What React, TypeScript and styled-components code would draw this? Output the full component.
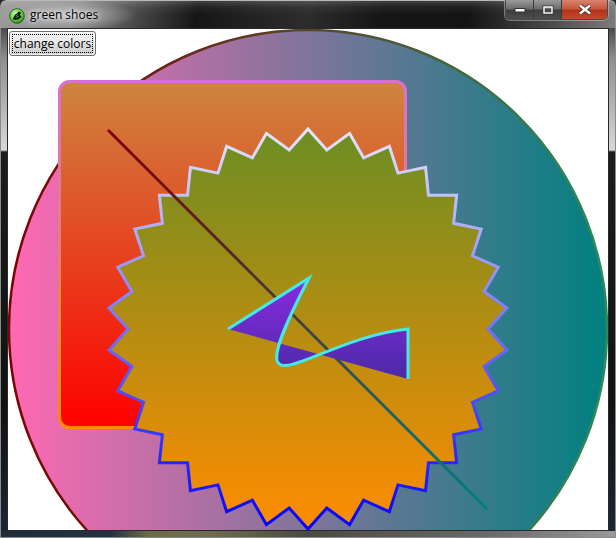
import React from "react";
import styled, { createGlobalStyle } from "styled-components";

const Global = createGlobalStyle`
  html, body { margin: 0; padding: 0; background: #2a2a2a; }
  body { width: 616px; height: 538px; overflow: hidden; }
`;

const Window = styled.div`
  width: 616px;
  height: 538px;
  display: flex;
  flex-direction: column;
  border-radius: 6px 6px 0 0;
  overflow: hidden;
  font-family: "Open Sans", "Noto Sans", sans-serif;
`;

const TitleBar = styled.div`
  height: 28px;
  flex: none;
  display: flex;
  align-items: flex-start;
  box-sizing: border-box;
  border-top: 1px solid #b8b8b8;
  border-left: 1px solid #9a9a9a;
  border-right: 1px solid #9a9a9a;
  border-radius: 6px 6px 0 0;
  padding: 0 7px 0 8px;
  background:
    radial-gradient(ellipse 70px 16px at 66px 14px, rgba(215,215,215,0.75) 0%, rgba(190,190,190,0.45) 55%, rgba(160,160,160,0) 100%),
    linear-gradient(to bottom, rgba(255,255,255,0.18) 0px, rgba(255,255,255,0.05) 6px, rgba(0,0,0,0) 14px),
    linear-gradient(100deg, #9a9a9a 0%, #858585 12%, #4a4a4a 22%, #161616 32%, #262626 44%, #2c2c2c 50%, #161616 62%, #141414 76%, #3c3c3c 86%, #7c7c7c 100%);
`;

const AppIcon = styled.svg`
  flex: none;
  margin-top: 7px;
  width: 16px;
  height: 16px;
`;

const Title = styled.span`
  margin: 5px 0 0 5px;
  font-size: 12px;
  line-height: 17px;
  color: #000;
  text-shadow: 0 0 4px rgba(255,255,255,0.9), 0 0 8px rgba(255,255,255,0.6);
`;

const Spacer = styled.div`
  flex: 1;
`;

const Controls = styled.div`
  display: flex;
  height: 19px;
  margin-top: -1px;
  border: 1px solid #4a4a4a;
  border-top: none;
  border-radius: 0 0 5px 5px;
  overflow: hidden;
  box-shadow: 0 0 0 1px rgba(200,200,200,0.5);
`;

const CtrlButton = styled.div<{ $w: number; $close?: boolean }>`
  width: ${(p) => p.$w}px;
  height: 19px;
  display: flex;
  align-items: center;
  justify-content: center;
  box-sizing: border-box;
  border-left: ${(p) => (p.$close ? "1px solid #3a3a3a" : "none")};
  & + & { border-left: 1px solid #3a3a3a; }
  background: ${(p) =>
    p.$close
      ? "linear-gradient(to bottom, #d8836f 0%, #c9583f 45%, #b3321b 55%, #c44a2c 100%)"
      : "linear-gradient(to bottom, #9a9a9a 0%, #6c6c6c 45%, #3e3e3e 55%, #4e4e4e 100%)"};
`;

const Body = styled.div`
  display: flex;
  height: 503px;
  flex: none;
`;

const SideFrame = styled.div<{ $right?: boolean }>`
  width: 7px;
  flex: none;
  box-sizing: border-box;
  border-${(p) => (p.$right ? "right" : "left")}: 1px solid #8a8a8a;
  background: linear-gradient(to bottom, #4a4a4a 0px, #8e8e8e 30px, #cfcfcf 110px, #d8d8d8 122px, #1c1c1c 124px, #121212 380px, #1a2636 503px);
`;

const Client = styled.div`
  width: 600px;
  height: 501px;
  border: 1px solid #2a2a2a;
  background: #fff;
  display: grid;
  grid-template: 1fr / 1fr;
  overflow: hidden;
`;

const Canvas = styled.svg`
  grid-area: 1 / 1;
  width: 600px;
  height: 501px;
  display: block;
`;

const ActionButton = styled.button`
  grid-area: 1 / 1;
  align-self: start;
  justify-self: start;
  position: relative;
  z-index: 1;
  margin: 2px 0 0 1px;
  width: 87px;
  height: 25px;
  padding: 0;
  font-family: "Open Sans", "Noto Sans", sans-serif;
  font-size: 12px;
  color: #000;
  border: 1px solid #707070;
  border-radius: 3px;
  background: linear-gradient(to bottom, #f2f2f2 0%, #ebebeb 48%, #dddddd 52%, #cfcfcf 100%);
  box-shadow: inset 0 0 0 1px rgba(255,255,255,0.7);
  outline: 1px dotted #000;
  outline-offset: -4px;
`;

const BottomFrame = styled.div`
  height: 7px;
  flex: none;
  box-sizing: border-box;
  border-left: 1px solid #8a8a8a;
  border-right: 1px solid #8a8a8a;
  border-bottom: 1px solid #8a8a8a;
  background: linear-gradient(to right, #1e2c3e 0%, #243244 18%, #6a6a48 24%, #6e6c4e 34%, #4a4a44 50%, #6a6a6a 80%, #9a9a9a 100%);
`;

function starPoints(cx: number, cy: number, n: number, outer: number, inner: number) {
  const pts: string[] = [];
  for (let i = 0; i < n * 2; i++) {
    const a = ((-90 + (i * 180) / n) * Math.PI) / 180;
    const r = i % 2 === 0 ? outer : inner;
    pts.push(`${(cx + r * Math.cos(a)).toFixed(2)},${(cy + r * Math.sin(a)).toFixed(2)}`);
  }
  return pts.join(" ");
}

export default function App() {
  return (
    <>
      <Global />
      <Window>
        <TitleBar>
          <AppIcon viewBox="0 0 16 16">
            <defs>
              <radialGradient id="ig" cx="0.4" cy="0.35" r="0.7">
                <stop offset="0" stopColor="#c8ffb0" />
                <stop offset="0.6" stopColor="#5ed43a" />
                <stop offset="1" stopColor="#2a7a1a" />
              </radialGradient>
            </defs>
            <circle cx="8" cy="8" r="7.3" fill="url(#ig)" stroke="#1d4d14" strokeWidth="0.8" />
            <path d="M4 10.5 L6 6.5 L8 5.5 L9.5 3.5 L12 4.5 L11 7 L12.5 9 L9 11.5 L5 12 Z" fill="#111" />
            <path d="M6.5 8 L9 6.5 M7 9.5 L10 8" stroke="#5ed43a" strokeWidth="0.8" />
          </AppIcon>
          <Title>green shoes</Title>
          <Spacer />
          <Controls>
            <CtrlButton $w={27}>
              <svg width="12" height="6" viewBox="0 0 12 6">
                <rect x="1" y="1.5" width="10" height="3.5" fill="#fff" stroke="#333" strokeWidth="1" />
              </svg>
            </CtrlButton>
            <CtrlButton $w={28}>
              <svg width="12" height="10" viewBox="0 0 12 10">
                <rect x="1" y="1" width="10" height="8" fill="none" stroke="#333" strokeWidth="1" />
                <rect x="2" y="2" width="8" height="6" fill="none" stroke="#fff" strokeWidth="1.4" />
                <rect x="3.5" y="4" width="5" height="2.5" fill="#4a4a4a" />
              </svg>
            </CtrlButton>
            <CtrlButton $w={46} $close>
              <svg width="14" height="11" viewBox="0 0 14 11">
                <path d="M2 1.5 L12 9.5 M12 1.5 L2 9.5" stroke="#4a2a22" strokeWidth="4.2" />
                <path d="M2 1.5 L12 9.5 M12 1.5 L2 9.5" stroke="#fff" strokeWidth="2.6" />
              </svg>
            </CtrlButton>
          </Controls>
        </TitleBar>
        <Body>
          <SideFrame />
          <Client>
            <Canvas viewBox="0 0 600 501">
              <defs>
                <linearGradient id="ovalFill" x1="0" y1="0" x2="1" y2="0">
                  <stop offset="0" stopColor="#ff69b4" />
                  <stop offset="1" stopColor="#008080" />
                </linearGradient>
                <linearGradient id="ovalStroke" x1="0" y1="0" x2="1" y2="0">
                  <stop offset="0" stopColor="#800000" />
                  <stop offset="1" stopColor="#2e8b57" />
                </linearGradient>
                <linearGradient id="rectFill" x1="0" y1="0" x2="0" y2="1">
                  <stop offset="0" stopColor="#cd853f" />
                  <stop offset="1" stopColor="#ff0000" />
                </linearGradient>
                <linearGradient id="rectStroke" x1="0" y1="0" x2="0" y2="1">
                  <stop offset="0" stopColor="#da70d6" />
                  <stop offset="1" stopColor="#ff8c00" />
                </linearGradient>
                <linearGradient id="starFill" x1="0" y1="0" x2="0" y2="1">
                  <stop offset="0" stopColor="#6b8e23" />
                  <stop offset="1" stopColor="#ff8c00" />
                </linearGradient>
                <linearGradient id="starStroke" x1="0" y1="0" x2="0" y2="1">
                  <stop offset="0" stopColor="#e6e6fa" />
                  <stop offset="1" stopColor="#0000ff" />
                </linearGradient>
                <linearGradient id="lineStroke" gradientUnits="userSpaceOnUse" x1="100" y1="100" x2="480" y2="480">
                  <stop offset="0" stopColor="#800000" />
                  <stop offset="1" stopColor="#008080" />
                </linearGradient>
                <linearGradient id="shapeFill" x1="0" y1="0" x2="0" y2="1">
                  <stop offset="0" stopColor="#8a2be2" />
                  <stop offset="1" stopColor="#4b2aa6" />
                </linearGradient>
              </defs>
              <circle cx="300" cy="300" r="299" fill="url(#ovalFill)" stroke="url(#ovalStroke)" strokeWidth="2.5" />
              <rect x="51.5" y="52.5" width="346" height="346" rx="10" fill="url(#rectFill)" stroke="url(#rectStroke)" strokeWidth="3" />
              <polygon points={starPoints(300, 300, 30, 200, 180)} fill="url(#starFill)" stroke="url(#starStroke)" strokeWidth="3" />
              <line x1="100" y1="101" x2="479" y2="480" stroke="url(#lineStroke)" strokeWidth="3" />
              <path d="M220 300 L301 249 C222 402 300 310 400 300 L400 350" fill="url(#shapeFill)" stroke="#44eaea" strokeWidth="3" />
            </Canvas>
            <ActionButton>change colors</ActionButton>
          </Client>
          <SideFrame $right />
        </Body>
        <BottomFrame />
      </Window>
    </>
  );
}
